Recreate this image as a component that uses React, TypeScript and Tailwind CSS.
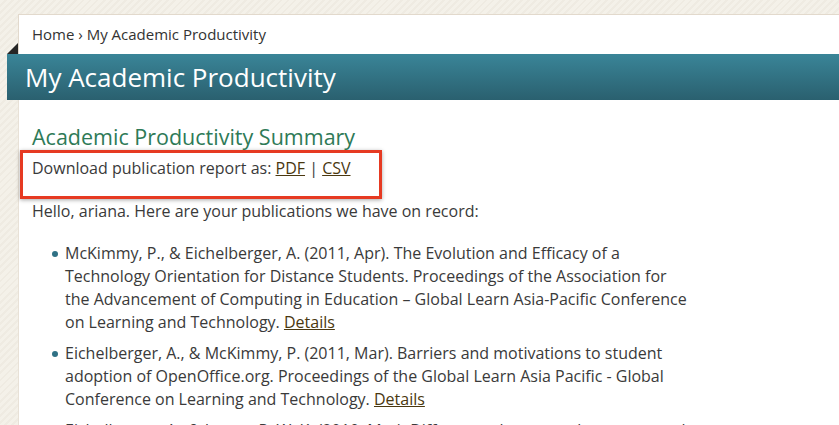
import React from 'react';

const pubs = [
  {
    lines: [
      'McKimmy, P., & Eichelberger, A. (2011, Apr). The Evolution and Efficacy of a',
      'Technology Orientation for Distance Students. Proceedings of the Association for',
      'the Advancement of Computing in Education – Global Learn Asia-Pacific Conference',
      'on Learning and Technology.',
    ],
  },
  {
    lines: [
      'Eichelberger, A., & McKimmy, P. (2011, Mar). Barriers and motivations to student',
      'adoption of OpenOffice.org. Proceedings of the Global Learn Asia Pacific - Global',
      'Conference on Learning and Technology.',
    ],
  },
  {
    lines: [
      'Eichelberger, A., & Leong, P. W. K. (2010, Mar). Differences between elementary and',
      'secondary teachers in technology use.',
    ],
  },
];

export default function App() {
  return (
    <div className="h-[425px] overflow-hidden bg-[#f3f0e8] bg-[repeating-linear-gradient(135deg,#f4f1e9_0px,#f4f1e9_3px,#efebe2_3px,#efebe2_5px)] pt-[14px] pl-[7px] font-['Open_Sans',sans-serif] text-[16px] text-[#3a3a3a]">
      <div className="relative">
        <div className="ml-[11px] flex h-[40px] items-center border-t border-l border-[#e2d9cc] bg-white pl-[13px] text-[15px] text-[#333]">
          Home › My Academic Productivity
        </div>
        <div className="absolute left-0 top-[29px] h-0 w-0 border-b-[11px] border-l-[11px] border-b-[#262626] border-l-transparent" />
        <div className="flex h-[46px] items-center bg-gradient-to-b from-[#3a8598] to-[#2a606f] pl-[18px] text-[26px] text-white">
          My Academic Productivity
        </div>
        <div className="ml-[11px] h-[400px] border-l border-[#e8e1d6] bg-white pl-[13px] pt-[24px]">
          <h2 className="text-[21.5px] leading-[26px] font-normal text-[#2e7a57]">
            Academic Productivity Summary
          </h2>
          <div className="-ml-[12px] h-[49px] w-[362px] border-[3px] border-[#e63a22] pl-[9px] pt-[5px] leading-[20px] shadow-[0_1px_4px_rgba(0,0,0,0.35)]">
            Download publication report as:{' '}
            <a className="text-[#4a3810] underline">PDF</a> |{' '}
            <a className="text-[#4a3810] underline">CSV</a>
          </div>
          <p className="mt-[2px] leading-[20px]">
            Hello, ariana. Here are your publications we have on record:
          </p>
          <ul className="mt-[21px] pl-[20px]">
            {pubs.map((p, i) => (
              <li key={i} className="relative mb-[8px] pl-[13px] leading-[23px]">
                <span className="absolute left-0 top-[9px] h-[6px] w-[6px] rounded-full bg-[#2f7185]" />
                {p.lines.map((l, j) => (
                  <React.Fragment key={j}>
                    {l}
                    {j < p.lines.length - 1 ? <br /> : null}
                  </React.Fragment>
                ))}{' '}
                <a className="text-[#4a3810] underline">Details</a>
              </li>
            ))}
          </ul>
        </div>
      </div>
    </div>
  );
}
